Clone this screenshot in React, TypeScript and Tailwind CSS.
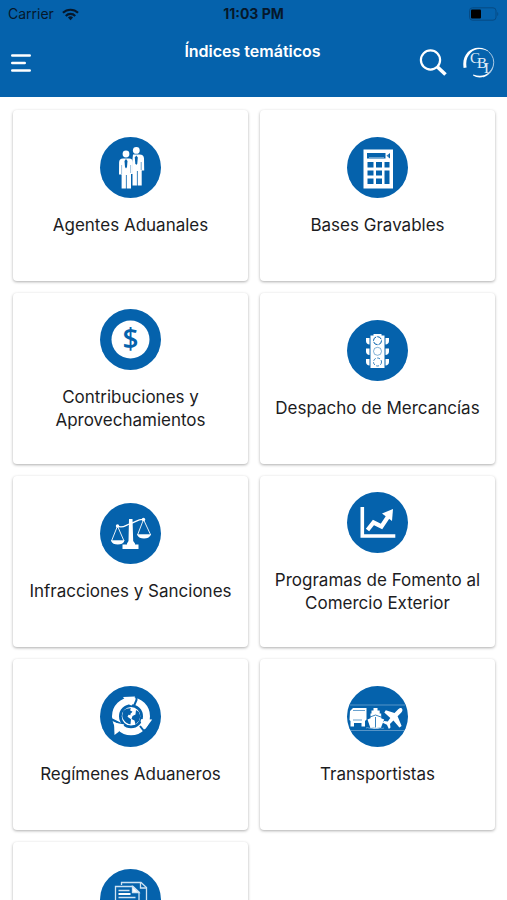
import type { ReactNode } from "react";

type Topic = {
  label: string;
  icon: ReactNode;
};

const BLUE = "#0562ac";

function AgentsIcon() {
  return (
    <g fill="white">
      <circle cx="36.3" cy="13.4" r="3.4" />
      <path d="M33 17.600h6.500c3 0 4.400 1.400 4.500 4l.2 12h-2.500V48.500h-4V34h-.8v14.500h-4.400V22z" />
      <path d="M36.300 18.500l1.500 2-.5 6-1 1.500-1-1.500-.5-6z" fill={BLUE} />
      <path d="M41.200 25v8" stroke={BLUE} strokeWidth="0.600" />
      <circle cx="26" cy="17" r="4.200" fill={BLUE} />
      <circle cx="26" cy="17" r="3.400" />
      <path d="M23 21.400h6c2.600 0 3.900 1.500 3.900 4V37h-1.900v14.500h-4.300V38h-.8v13.500h-4.300V37.500h-2.600l.1-12c.1-2.600 1.300-4.100 3.900-4.100z" />
      <path d="M26 22l1.500 2-.5 6-1 1.500-1-1.500-.5-6z" fill={BLUE} />
      <path d="M21.600 28v9M30.600 28v8" stroke={BLUE} strokeWidth="0.400" />
    </g>
  );
}

function CalculatorIcon() {
  return (
    <>
      <rect x="16.500" y="12.500" width="29.500" height="39" fill="white" />
      <g fill={BLUE}>
        <rect x="20" y="16" width="18.500" height="5.500" />
        <path d="M39.500 18.700l3.500-2.700v5.400z" />
        <rect x="20.500" y="25" width="6" height="5.500" />
        <rect x="29" y="25" width="6" height="5.500" />
        <rect x="37.500" y="25" width="5" height="5.500" />
        <rect x="20.500" y="33.500" width="6" height="5" />
        <rect x="29" y="33.500" width="6" height="5" />
        <rect x="20.500" y="41.500" width="6" height="5.500" />
        <rect x="29" y="41.500" width="6" height="5.500" />
        <rect x="37.500" y="33.500" width="5" height="13.500" />
      </g>
      <path d="M22 20.500h15M41 17.500v2.500" stroke="white" strokeWidth="0.400" />
    </>
  );
}

function MoneyIcon() {
  return (
    <>
      <circle cx="30.500" cy="30.500" r="19" fill="white" />
      <text
        x="30.500"
        y="40"
        textAnchor="middle"
        fontSize="28"
        fontWeight="600"
        fontFamily="'Open Sans', sans-serif"
        fill={BLUE}
      >
        $
      </text>
    </>
  );
}

function TrafficLightIcon() {
  return (
    <>
      <g fill="white">
        <path d="M26.500 14h8v1.500h3V48h-14V15.500h3z" />
        <path d="M19 18h3.500v6.500c-2 0-3.500-1.500-3.500-3.500zM19 28.500h3.500V35c-2 0-3.500-1.500-3.500-3.500zM19 39h3.500v6.500c-2 0-3.500-1.500-3.500-3.500z" />
        <path d="M42 18h-3.500v6.500c2 0 3.500-1.500 3.500-3.500zM42 28.500h-3.500V35c2 0 3.500-1.500 3.500-3.500zM42 39h-3.500v6.500c2 0 3.500-1.500 3.500-3.500z" />
      </g>
      <g fill="none" stroke={BLUE}>
        <circle cx="30.500" cy="20.700" r="4" strokeWidth="1" strokeDasharray="5 1" />
        <circle cx="30.500" cy="31.300" r="4" strokeWidth="0.500" />
        <circle cx="30.500" cy="42" r="4" strokeWidth="0.800" strokeDasharray="3 1.500" />
      </g>
    </>
  );
}

function ScalesIcon() {
  return (
    <>
      <g fill="none" stroke="white" strokeLinejoin="round">
        <path d="M17.500 23c5 3 8-1 13-2.500s8-4.500 13-4" strokeWidth="1.300" />
        <path d="M17.500 23l-6 15h12.500zM43.500 16.500L37.500 32h13.200z" strokeWidth="0.900" />
      </g>
      <g fill="white">
        <circle cx="17.500" cy="23" r="1.700" />
        <circle cx="43.500" cy="16.500" r="1.700" />
        <path d="M11 37.500h13.500c-1 3-3.500 4-6.700 4s-5.800-1-6.800-4zM37.200 31.500h13.500c-1 3-3.500 4-6.700 4s-5.800-1-6.800-4z" />
        <path d="M29 16h3.500l.7 22 1.800 2.500v1h3.500V46h-16v-4.500H27v-1l1.500-2.500z" />
      </g>
    </>
  );
}

function ChartIcon() {
  return (
    <>
      <path d="M15.300 15v29h33" fill="none" stroke="white" strokeWidth="3.600" />
      <path d="M20.500 38l6-7.500 8 4L41.500 24" fill="none" stroke="white" strokeWidth="4.200" />
      <path d="M35 21.500l11-4.500-1 12z" fill="white" />
    </>
  );
}

function GlobeIcon() {
  return (
    <>
      <circle cx="31" cy="30.300" r="15.500" fill="none" stroke="white" strokeWidth="7" />
      {/* gaps between the three arrows */}
      <path
        d="M36.500 9v5l-3 7M54 37l-10 8-4-5M10 32.500l12 6"
        fill="none"
        stroke={BLUE}
        strokeWidth="2"
      />
      <g fill="white">
        <path d="M23 11l12-.5-3.500 9.500-4-3z" />
        <path d="M39 33l13.200.5-7 9.500z" />
        <path d="M24.500 38.500l-10.500-2 .5 12.500 4-3z" />
      </g>
      <circle cx="31" cy="30.300" r="10" fill="white" stroke={BLUE} strokeWidth="1.400" />
      <g fill={BLUE}>
        <path d="M23 25.500c2-2.500 4.500-3.500 8-3.300l-1 2 2.500 1.500-2.500 2.500 1.500 1-3-.5-1 2 3.500 2.500-.5 5c-4.500-.5-8-4.500-8.300-8.500z" />
        <path d="M36 24l3 2 1.300 4-1 4.500-3.800 4-1-4-3-1.500 1-3 3-1.500z" />
      </g>
    </>
  );
}

function TransportIcon() {
  return (
    <>
      <path d="M3 19h55M3 44.500h55" stroke="#8db9dc" strokeWidth="0.600" />
      <g fill="white">
        {/* truck */}
        <path d="M3 25l3-3h13.500v11.500l-1.500 1.500v5.500h-3.500V37H7v3.500H3.500V35L2.500 34z" />
        {/* ship */}
        <path d="M26.500 22h4v2.500h2.200v3h1.500v4.700l3 1.300-3.400 8.500c-2 1-8.200 1-10.400 0L20.500 33.500l3-1.300v-4.700h1v-3h2z" />
        {/* plane */}
        <path d="M54.800 22.400c1.300 1.200.5 3.200-.7 4.400l-3.500 3.500 4 9.700-2.200 1.500-6-7-3.400 3.400.5 3.600-1.600 1.500-2-4.300-4.200-2 1.500-1.600 3.600.5 2.500-3.500-6-5.600 1.500-2.200 8.700 2.800 3.500-3.700c1.100-1.100 2.700-2 3.800-1z" />
      </g>
      <path d="M6 24.500h12M6 34h9" stroke={BLUE} strokeWidth="0.600" />
      <path d="M28.500 31v10.500M23 31l5.500-2 5.500 2" fill="none" stroke={BLUE} strokeWidth="0.800" />
      <path d="M19 42c2-1.500 4 1.500 6 0s4 1.500 6 0 4 1.500 6 0" fill="none" stroke="#8db9dc" strokeWidth="0.700" />
    </>
  );
}

function DocumentsIcon() {
  return (
    <g fill="none" stroke="#cfe2f2" strokeWidth="1.300">
      <path d="M21.500 16v-2.500H41l5.500 5V48H39" />
      <path d="M40.500 14v5h6" />
      <path d="M15.500 17.500H33l6 5.500v29H15.500z" />
      <path d="M32.500 17.500V23.500H39z" fill="white" />
      <path d="M18.500 21.500h11M18.500 28.500h17M18.500 32.500h17" />
      <path d="M18.500 25h12" stroke="white" strokeWidth="2" />
    </g>
  );
}

const topics: Topic[] = [
  { label: "Agentes Aduanales", icon: <AgentsIcon /> },
  { label: "Bases Gravables", icon: <CalculatorIcon /> },
  { label: "Contribuciones y Aprovechamientos", icon: <MoneyIcon /> },
  { label: "Despacho de Mercancías", icon: <TrafficLightIcon /> },
  { label: "Infracciones y Sanciones", icon: <ScalesIcon /> },
  { label: "Programas de Fomento al Comercio Exterior", icon: <ChartIcon /> },
  { label: "Regímenes Aduaneros", icon: <GlobeIcon /> },
  { label: "Transportistas", icon: <TransportIcon /> },
  { label: "", icon: <DocumentsIcon /> },
];

function StatusBar() {
  return (
    <div className="grid h-7 grid-cols-3 items-center px-2 text-sm text-[#06182b]">
      <div className="flex items-center gap-2">
        <span>Carrier</span>
        <svg width="17" height="13" viewBox="0 0 18 13" fill="none" stroke="currentColor" strokeWidth="2.300">
          <path d="M1 4.700a11.500 11.500 0 0 1 16 0" />
          <path d="M4 8a7 7 0 0 1 10 0" />
          <path d="M9 12.500L6.300 9.800a3.800 3.800 0 0 1 5.400 0z" fill="currentColor" stroke="none" />
        </svg>
      </div>
      <span className="text-center font-bold">11:03 PM</span>
      <svg className="justify-self-end" width="30" height="14" viewBox="0 0 30 14">
        <rect x="0.500" y="0.800" width="26.500" height="12.400" rx="3" fill="none" stroke="#064a84" />
        <rect x="2" y="2.500" width="10" height="9" rx="1" fill="black" />
        <path d="M28.300 5v4c1.300-.5 1.300-3.500 0-4z" fill="#064a84" />
      </svg>
    </div>
  );
}

function Header() {
  return (
    <header className="shrink-0 bg-[#0562ac]">
      <StatusBar />
      <div className="grid h-[69px] grid-cols-[1fr_auto_1fr] items-center pr-3 pl-2.5">
        <button type="button" aria-label="Menú" className="justify-self-start">
          <svg width="22" height="20" viewBox="0 0 22 20" stroke="white" strokeWidth="2.600" strokeLinecap="round">
            <path d="M2.300 2.500h17.400M2.300 10h12.400M2.300 17.500h17.400" />
          </svg>
        </button>
        <h1 className="self-start pt-[11px] text-base font-semibold text-white">
          Índices temáticos
        </h1>
        <div className="flex items-center gap-4 justify-self-end">
          <button type="button" aria-label="Buscar">
            <svg width="28" height="28" viewBox="0 0 28 28" fill="none" stroke="white">
              <circle cx="11.500" cy="11" r="9.600" strokeWidth="2.200" />
              <path d="M18.500 18l8 7.500" strokeWidth="3.600" />
            </svg>
          </button>
          <a href="#inicio" aria-label="Inicio">
            <svg width="32" height="32" viewBox="0 0 32 32">
              <path d="M.6 21C-1.500 8 7 1 15 .7c5-.2 9 1.500 11.500 4.500C19 .5 12 1.500 8 5.500 4 9.500 2.500 14 3.600 20.500z" fill="white" />
              <path d="M26 5A14.800 14.800 0 0 1 20 30" fill="none" stroke="#b9d3e9" strokeWidth="0.900" />
              <path d="M10 28.500C17 33 28 30 30.500 17 28 27 20 31 10.300 27.500z" fill="white" />
              <text x="7" y="16" fill="#e3eef8" fontFamily="'Liberation Serif', serif" fontSize="15">
                C<tspan dx="-3" dy="5">B</tspan><tspan dx="-3" dy="5">I</tspan>
              </text>
            </svg>
          </a>
        </div>
      </div>
    </header>
  );
}

function TopicCard({ label, icon }: Topic) {
  return (
    <button
      type="button"
      className="flex h-[171px] flex-col items-center justify-center rounded-sm bg-white px-3 shadow-[0_1px_3px_rgba(0,0,0,0.32)]"
    >
      <svg width="61" height="61" viewBox="0 0 61 61">
        <circle cx="30.500" cy="30.500" r="30.500" fill={BLUE} />
        {icon}
      </svg>
      <span className="mt-4 mb-[17px] min-h-[23px] text-[17px] leading-[23px] text-[#1c1c1e]">
        {label}
      </span>
    </button>
  );
}

export default function App() {
  return (
    <div className="flex h-screen flex-col bg-white font-[Inter,'Liberation_Sans',sans-serif]">
      <Header />
      <main className="min-h-0 flex-1 overflow-y-auto [scrollbar-width:none]">
        <div className="grid grid-cols-2 gap-3 py-[13px] pr-3 pl-[13px]">
          {topics.map((topic, i) => (
            <TopicCard key={i} {...topic} />
          ))}
        </div>
      </main>
    </div>
  );
}
